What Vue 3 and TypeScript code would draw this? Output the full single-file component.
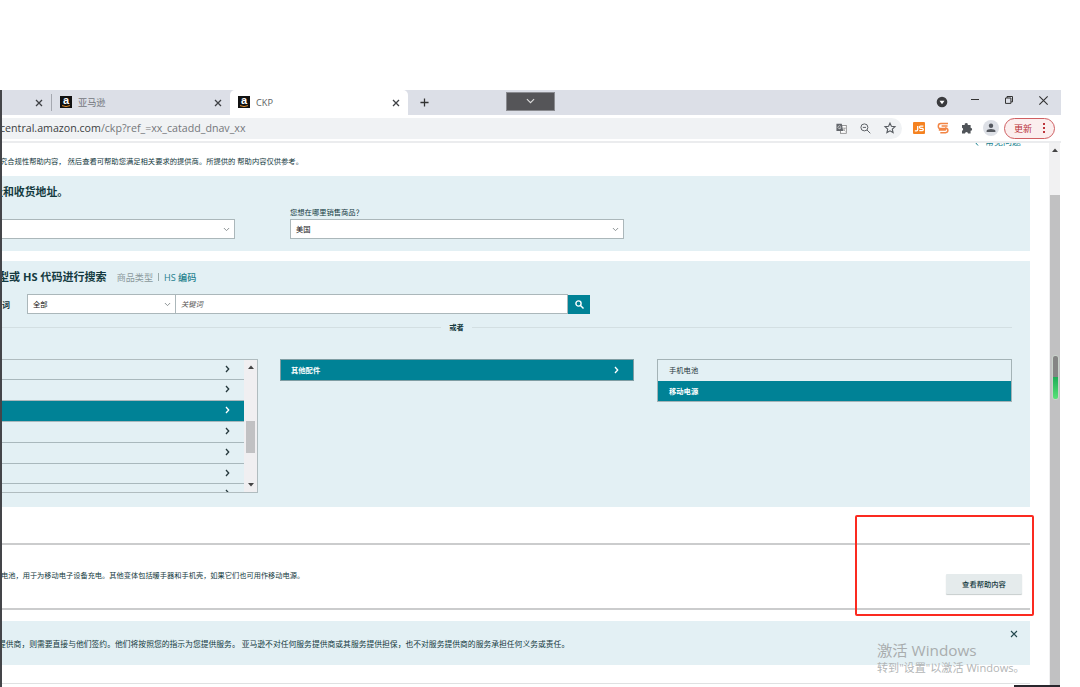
<script setup lang="ts">
interface TreeRow {
  id: number
  selected: boolean
}

const treeRows: TreeRow[] = Array.from({ length: 7 }, (_, i) => ({ id: i, selected: i === 2 }))
</script>

<template>
  <div class="screen">
    <div class="window">
      <header class="tabs">
        <div class="tab tab-first">
          <svg class="x" viewBox="0 0 8 8"><path d="M1 1l6 6M7 1l-6 6" /></svg>
        </div>
        <div class="tab tab-second">
          <svg class="fav" viewBox="0 0 12 12">
            <rect width="12" height="12" fill="#111" />
            <text x="6" y="8.4" text-anchor="middle" class="fav-a">a</text>
            <path d="M2 9.6q4 2 8 0" stroke="#d98a2b" fill="none" />
          </svg>
          <span class="tab-name">亚马逊</span>
          <svg class="x" viewBox="0 0 8 8"><path d="M1 1l6 6M7 1l-6 6" /></svg>
        </div>
        <div class="tab tab-active">
          <svg class="fav" viewBox="0 0 12 12">
            <rect width="12" height="12" fill="#111" />
            <text x="6" y="8.4" text-anchor="middle" class="fav-a">a</text>
            <path d="M2 9.6q4 2 8 0" stroke="#d98a2b" fill="none" />
          </svg>
          <span class="tab-name latin">CKP</span>
          <svg class="x" viewBox="0 0 8 8"><path d="M1 1l6 6M7 1l-6 6" /></svg>
        </div>
        <div class="tab-rest">
          <svg class="plus" viewBox="0 0 10 10"><path d="M5 .5v9M.5 5h9" /></svg>
          <div class="drop">
            <svg viewBox="0 0 10 6"><path d="M1 .8l4 4 4-4" /></svg>
          </div>
          <div class="win-controls">
            <svg class="w-circle" viewBox="0 0 12 12"><circle cx="6" cy="6" r="5.3" fill="#3a3b3e" /><path d="M3.5 4.7h5L6 8.2z" fill="#fff" /></svg>
            <svg class="w-min" viewBox="0 0 8 8"><path d="M0 3.5h8" /></svg>
            <svg class="w-max" viewBox="0 0 8 8"><path d="M.5 2h5.4v5.4H.5zM2 2V.5h5.5v5.4H6" /></svg>
            <svg class="w-close" viewBox="0 0 8 8"><path d="M.3.3l7.4 7.4M7.7.3L.3 7.7" /></svg>
          </div>
        </div>
      </header>

      <div class="toolbar">
        <div class="omnibox">
          <span class="url"><b>central.amazon.com</b>/ckp?ref_=xx_catadd_dnav_xx</span>
          <svg class="i-tr" viewBox="0 0 12 12">
            <rect x="4.8" y="2.8" width="6.4" height="8.4" fill="#fff" stroke="#777" stroke-width=".8" />
            <path d="M.5.8h5.8l1.6 7.8H.5z" fill="#62666b" />
            <path d="M5.2 3.9a1.6 1.6 0 1 0 .1 1.300H4" fill="none" stroke="#e8e8e8" stroke-width=".8" />
            <path d="M7.600 5.600h3M9.600 5.800c-.4 1.200-1 2-1.800 2.600M8.200 7l1.900 2.200" fill="none" stroke="#777" stroke-width=".7" />
          </svg>
          <svg class="i-zoom" viewBox="0 0 11 11"><circle cx="4.4" cy="4.4" r="3.5" /><path d="M7 7l3.3 3.3M2.8 4.4H6" /></svg>
          <svg class="i-star" viewBox="0 0 12 12"><path d="M6 1.1l1.4 3.2 3.6.4-2.7 2.4.8 3.5L6 8.8l-3.1 1.8.8-3.5L1 4.7l3.6-.4z" /></svg>
        </div>
        <svg class="i-js" viewBox="0 0 12 12"><rect width="12" height="12" rx="1" fill="#f58220" /><path d="M4.7 4v3.6q0 1.2-1.2 1.2H1.8M10.4 4.1H7.6Q6.5 4.1 6.5 5t1 1.3h1.8q1 .1 1 1.1t-1 1.2H6.3" fill="none" stroke="#fff" stroke-width="1.3" /></svg>
        <svg class="i-s" viewBox="0 0 12 12"><path d="M11 1.500H3.800Q1.300 1.500 1.300 4.200T3.800 6.500h4q.9 0 .9.800t-.9.800H1.800M10.600 4.100H4.600M8 6h.5q2.400.2 2.400 2.300t-2.400 2.500H3.300" fill="none" stroke="#f28544" stroke-width="1.500" /></svg>
        <svg class="i-puz" viewBox="0 0 12 12"><path d="M1 3h2.700a1.600 1.600 0 1 1 3.100 0h2.800v2.800a1.500 1.500 0 1 1 0 3V11.500H7a1.500 1.500 0 0 0-3 0H1V8.700a1.500 1.500 0 0 0 0-2.900z" fill="#505459" /></svg>
        <div class="avatar"><svg viewBox="0 0 10 10"><circle cx="5" cy="2.800" r="2.200" /><path d="M.6 9V7.800Q1.200 5.900 5 5.900t4.400 1.900V9z" /></svg></div>
        <div class="update"><span>更新</span><i></i></div>
      </div>

      <div class="viewport">
        <main class="page">
          <div class="intro">
            <p>究合规性帮助内容， 然后查看可帮助您满足相关要求的提供商。所提供的 帮助内容仅供参考。</p>
            <div class="faq">
              <svg viewBox="0 0 5 8"><path d="M4 .5L1 4l3 3.500" /></svg><span>常见问题</span>
            </div>
          </div>

          <section class="panel locations">
            <h2>址和收货地址。</h2>
            <div class="selects">
              <div class="select s-left"><svg class="chev" viewBox="0 0 8 5"><path d="M1 .8l3 3 3-3" /></svg></div>
              <div class="field">
                <label>您想在哪里销售商品？</label>
                <div class="select"><span>美国</span><svg class="chev" viewBox="0 0 8 5"><path d="M1 .8l3 3 3-3" /></svg></div>
              </div>
            </div>
          </section>

          <section class="panel search">
            <div class="heading">
              <h2>型或 HS 代码进行搜索</h2>
              <span class="muted">商品类型</span><i></i><a>HS 编码</a>
            </div>
            <div class="search-row">
              <b class="kw">词</b>
              <div class="select s-all"><span>全部</span><svg class="chev" viewBox="0 0 8 5"><path d="M1 .8l3 3 3-3" /></svg></div>
              <div class="input"><em>关键词</em></div>
              <button class="go"><svg viewBox="0 0 9 9"><circle cx="3.500" cy="3.500" r="2.600" /><path d="M5.500 5.500l3 3" /></svg></button>
            </div>
            <div class="or"><hr /><b>或者</b><hr /></div>
            <div class="columns">
              <div class="tree">
                <div class="rows">
                  <div v-for="row in treeRows" :key="row.id" class="row" :class="{ on: row.selected }">
                    <svg class="arr" viewBox="0 0 5 8"><path d="M1 1l2.700 3L1 7" /></svg>
                  </div>
                </div>
                <div class="mini-bar">
                  <svg viewBox="0 0 6 4"><path d="M0 4l3-3.500L6 4z" /></svg>
                  <i></i>
                  <svg viewBox="0 0 6 4"><path d="M0 0l3 3.500L6 0z" /></svg>
                </div>
              </div>
              <div class="col-b on"><b>其他配件</b><svg class="arr" viewBox="0 0 5 8"><path d="M1 1l2.700 3L1 7" /></svg></div>
              <div class="col-c">
                <div class="leaf">手机电池</div>
                <div class="leaf on"><b>移动电源</b></div>
              </div>
            </div>
          </section>

          <section class="result">
            <p>电池，用于为移动电子设备充电。其他变体包括暖手器和手机壳，如果它们也可用作移动电源。</p>
            <button class="help">查看帮助内容</button>
          </section>

          <section class="panel notice">
            <p>提供商，则需要直接与他们签约。他们将按照您的指示为您提供服务。 亚马逊不对任何服务提供商或其服务提供担保，也不对服务提供商的服务承担任何义务或责任。</p>
            <svg class="x" viewBox="0 0 8 8"><path d="M1 1l6 6M7 1l-6 6" /></svg>
          </section>
          <div class="foot"></div>
        </main>
        <div class="scrollbar">
          <svg viewBox="0 0 6 4"><path d="M0 4l3-3.500L6 4z" /></svg>
          <div class="thumb"></div>
        </div>
      </div>
    </div>

    <div class="meter"></div>
    <div class="mark-box"></div>
    <div class="watermark"><div class="wm1">激活 Windows</div><div class="wm2">转到"设置"以激活 Windows。</div></div>
    <div class="dark-corner"></div>
  </div>
</template>

<style>
html, body { margin: 0; background: #fff; overflow: hidden; }
</style>

<style scoped>
* { box-sizing: border-box; }
.screen { position: relative; width: 1080px; height: 687px; overflow: hidden; padding-top: 90px; background: #fff; color: #12383d; font-family: "Open Sans", "Noto Sans CJK SC", sans-serif; font-size: 7.3px; }
.window { width: 1061px; height: 597px; border-left: 2px solid #444549; overflow: hidden; }
p, h2 { margin: 0; white-space: nowrap; }
svg { display: block; flex: none; fill: none; overflow: visible; }
svg.x { width: 8px; height: 8px; stroke: #3e4145; stroke-width: 1.3; }

.tabs { display: flex; height: 25px; background: #dcdfe7; }
.tab { display: flex; align-items: center; height: 25px; }
.tab-first { width: 50px; padding-left: 33px; border-right: 1px solid #a5a8b0; height: 17px; margin-top: 4px; }
.tab-second { width: 178px; padding: 0 8.5px 0 8px; }
.tab-active { width: 178px; padding: 0 8px; background: #fff; border-radius: 5px 5px 0 0; }
.tab .fav { width: 12px; height: 12px; margin: -1px 6px 0 0; }
.tab-second .x, .tab-active .x { margin-left: auto; }
.fav-a { font: bold 11px "Liberation Sans", sans-serif; fill: #fff; }
.tab-name { font-size: 9.2px; color: #74777d; line-height: 14px; }
.tab-name.latin { font-size: 9.2px; color: #5c5f64; }
.tab-rest { flex: 1; display: flex; align-items: center; padding-left: 12px; }
.plus { width: 9px; height: 9px; stroke: #333; stroke-width: 1.4; }
.drop { width: 49px; height: 19px; margin: -3px 0 0 77px; background: #555558; border: 1px solid #8a8b90; display: flex; align-items: center; justify-content: center; }
.drop svg { width: 9px; height: 6px; stroke: #ddd; stroke-width: 1.2; }
.win-controls { margin-left: auto; display: flex; align-items: center; padding-right: 13px; margin-top: -5px; stroke: #333; }
.w-circle { width: 12px; height: 12px; margin: 4px 23px 0 0; stroke: none; }
.w-min { width: 8px; height: 8px; margin-right: 26px; }
.w-max { width: 8px; height: 8px; margin-right: 26px; }
.w-close { width: 9px; height: 9px; }

.toolbar { height: 28px; display: flex; align-items: center; background: #fff; border-bottom: 2px solid #ebecee; padding-right: 6px; }
.omnibox { width: 902px; height: 21px; background: #f0f2f4; border-radius: 0 11px 11px 0; display: flex; align-items: center; margin-left: -2px; padding-right: 6px; }
.url { flex: 1; font-size: 10.65px; line-height: 15px; color: #74777b; white-space: nowrap; }
.url b { font-weight: 400; color: #3c3e42; }
.i-tr { width: 11px; height: 11px; margin-right: 13px; }
.i-zoom { width: 11px; height: 11px; margin-right: 13px; stroke: #5f6368; }
.i-star { width: 12px; height: 12px; stroke: #55595f; stroke-width: 1.1; }
.i-js { width: 12px; height: 12px; margin-left: 11px; }
.i-s { width: 12px; height: 12px; margin-left: 12px; }
.i-puz { width: 12px; height: 12px; margin-left: 12px; }
.avatar { width: 16px; height: 16px; border-radius: 50%; background: #dde0e6; margin-left: 10px; display: flex; align-items: center; justify-content: center; }
.avatar svg { width: 10px; height: 10px; fill: #54585f; }
.update { width: 51px; height: 21px; margin-left: auto; border: 1px solid #cf5f62; border-radius: 11px; background: #fbeeee; color: #b93038; font-size: 9px; display: flex; align-items: center; padding: 0 9px; justify-content: space-between; }
.update i { width: 2px; height: 2px; background: #bd343b; box-shadow: 0 -4px #bd343b, 0 4px #bd343b; }

.viewport { display: flex; height: 544px; }
.page { width: 1047px; padding-right: 19px; }
.intro { height: 33px; overflow: hidden; display: flex; justify-content: space-between; padding-right: 9px; }
.intro p { font-size: 7.3px; line-height: 12px; margin: 12px 0 0 -2px; }
.faq { display: flex; height: 12px; margin-top: -7px; line-height: 12px; font-size: 9px; color: #16818f; gap: 6px; align-items: center; }
.faq svg { width: 5px; height: 8px; stroke: #16818f; }
.panel { background: #e3f0f4; overflow: hidden; }
h2 { font-size: 10.9px; line-height: 16px; font-weight: 700; color: #143a40; }
.locations { height: 75px; }
.locations h2 { margin: 8px 0 0 -10px; }
.selects { display: flex; align-items: flex-end; gap: 55px; margin-top: 6px; }
.select { height: 20px; background: #fff; border: 1px solid #abb7ba; display: flex; align-items: center; justify-content: space-between; padding: 0 4px 0 5px; color: #111; }
.s-left { width: 233px; border-left: 0; justify-content: flex-end; }
.field { width: 334px; }
.field label { display: block; line-height: 12px; height: 13px; white-space: nowrap; }
.chev { width: 7px; height: 5px; stroke: #7e8688; }

.search { height: 246px; margin-top: 10px; }
.heading { display: flex; align-items: center; height: 16px; margin: 8px 0 0 -4px; font-size: 9.1px; white-space: nowrap; }
.heading h2 { font-size: 11.05px; }
.heading .muted { margin-left: 10px; color: #8b999c; }
.heading i { width: 1px; height: 8px; background: #9aa; margin: 0 5px; }
.heading a { color: #1d7f8d; font-weight: 500; }
.search-row { display: flex; height: 20px; margin-top: 9px; align-items: center; }
.kw { width: 25px; font-size: 8px; }
.s-all { width: 149px; }
.input { width: 392px; height: 20px; background: #fff; border: 1px solid #abb7ba; border-left: 0; padding-left: 5px; line-height: 18px; color: #555; }
.go { width: 22px; height: 19px; border: 0; padding: 0; background: #008296; display: flex; align-items: center; justify-content: center; }
.go svg { width: 9px; height: 9px; stroke: #fff; stroke-width: 1.4; }
.or { display: flex; align-items: center; height: 12px; margin: 7px 18px 0 0; color: #143a40; }
.or hr { flex: 1; height: 1px; border: 0; background: #d3dfe2; margin: 0; }
.or hr:first-child { flex: 0 0 439px; }
.or b { width: 31px; text-align: center; }
.columns { display: flex; align-items: flex-start; margin-top: 26px; }
.tree { width: 256px; height: 134px; border: 1px solid #b0bcbf; border-left: 0; display: flex; }
.rows { width: 242px; overflow: hidden; }
.row { height: 20.9px; border-bottom: 1px solid #a9b8bc; display: flex; align-items: center; justify-content: flex-end; padding: 0 14px 2px 0; }
.row:first-child { height: 20px; }
.arr { width: 5px; height: 8px; stroke: #26393d; stroke-width: 1.3; }
.on { background: #008296; color: #fff; }
.on .arr { stroke: #fff; }
.mini-bar { flex: 1; background: #f0eff1; display: flex; flex-direction: column; align-items: center; padding: 5px 0; }
.mini-bar svg, .scrollbar svg { width: 6px; height: 4px; fill: #444; }
.mini-bar i { width: 9px; height: 32px; background: #c1c1c3; margin: 52px 0 auto; }
.col-b { width: 354px; height: 22px; margin-left: 22px; border: 1px solid #7f9da3; display: flex; align-items: center; justify-content: space-between; padding: 0 14px 1px 10px; }
.col-c { width: 355px; height: 43px; margin-left: 23px; border: 1px solid #a4b3b6; color: #26343a; }
.leaf { height: 20.5px; line-height: 20px; padding-left: 11px; }

.result { height: 67px; margin-top: 36px; border-top: 2px solid #cbcccd; border-bottom: 2px solid #cbcccd; display: flex; justify-content: space-between; padding-right: 8px; }
.result p { font-size: 7.23px; line-height: 12px; margin: 24px 0 0 -1px; }
.help { width: 76px; height: 20px; margin-top: 29px; padding: 0; border: 0; border-radius: 1px; background: #e5ebec; box-shadow: 0 1px 1px #c6cccd; color: #12383d; font: 500 7.3px/19px "Noto Sans CJK SC", sans-serif; }
.notice { height: 44px; margin-top: 11px; display: flex; justify-content: space-between; padding-right: 12px; }
.notice p { font-size: 7.8px; line-height: 14px; margin: 16px 0 0 -4px; }
.notice .x { margin-top: 9px; stroke: #24484e; stroke-width: 1.1; }
.foot { border-top: 1px solid #dfe1e2; margin-top: 18px; }

.scrollbar { width: 11px; background: #f1f1f2; display: flex; flex-direction: column; align-items: center; padding-top: 5px; }
.thumb { width: 10px; flex: 1; margin-top: 43px; background: #c1c1c2; }

.meter { position: absolute; left: 1052px; top: 355px; width: 7px; height: 45px; border: 1px solid #c9d3cb; border-radius: 3px; background: linear-gradient(#858585 0 49%, #1fae58 50%, #59e278); }
.mark-box { position: absolute; left: 855px; top: 515px; width: 179px; height: 101px; border: 2px solid #fb2a20; border-radius: 2px; }
.watermark { position: absolute; left: 877px; top: 639px; color: #a9adae; white-space: nowrap; }
.wm1 { font-size: 15.3px; line-height: 22px; }
.wm2 { font-size: 11.1px; line-height: 14px; color: #b2b5b6; }
.dark-corner { position: absolute; left: 1014px; top: 685px; width: 46px; height: 2px; background: #29272d; }
</style>
